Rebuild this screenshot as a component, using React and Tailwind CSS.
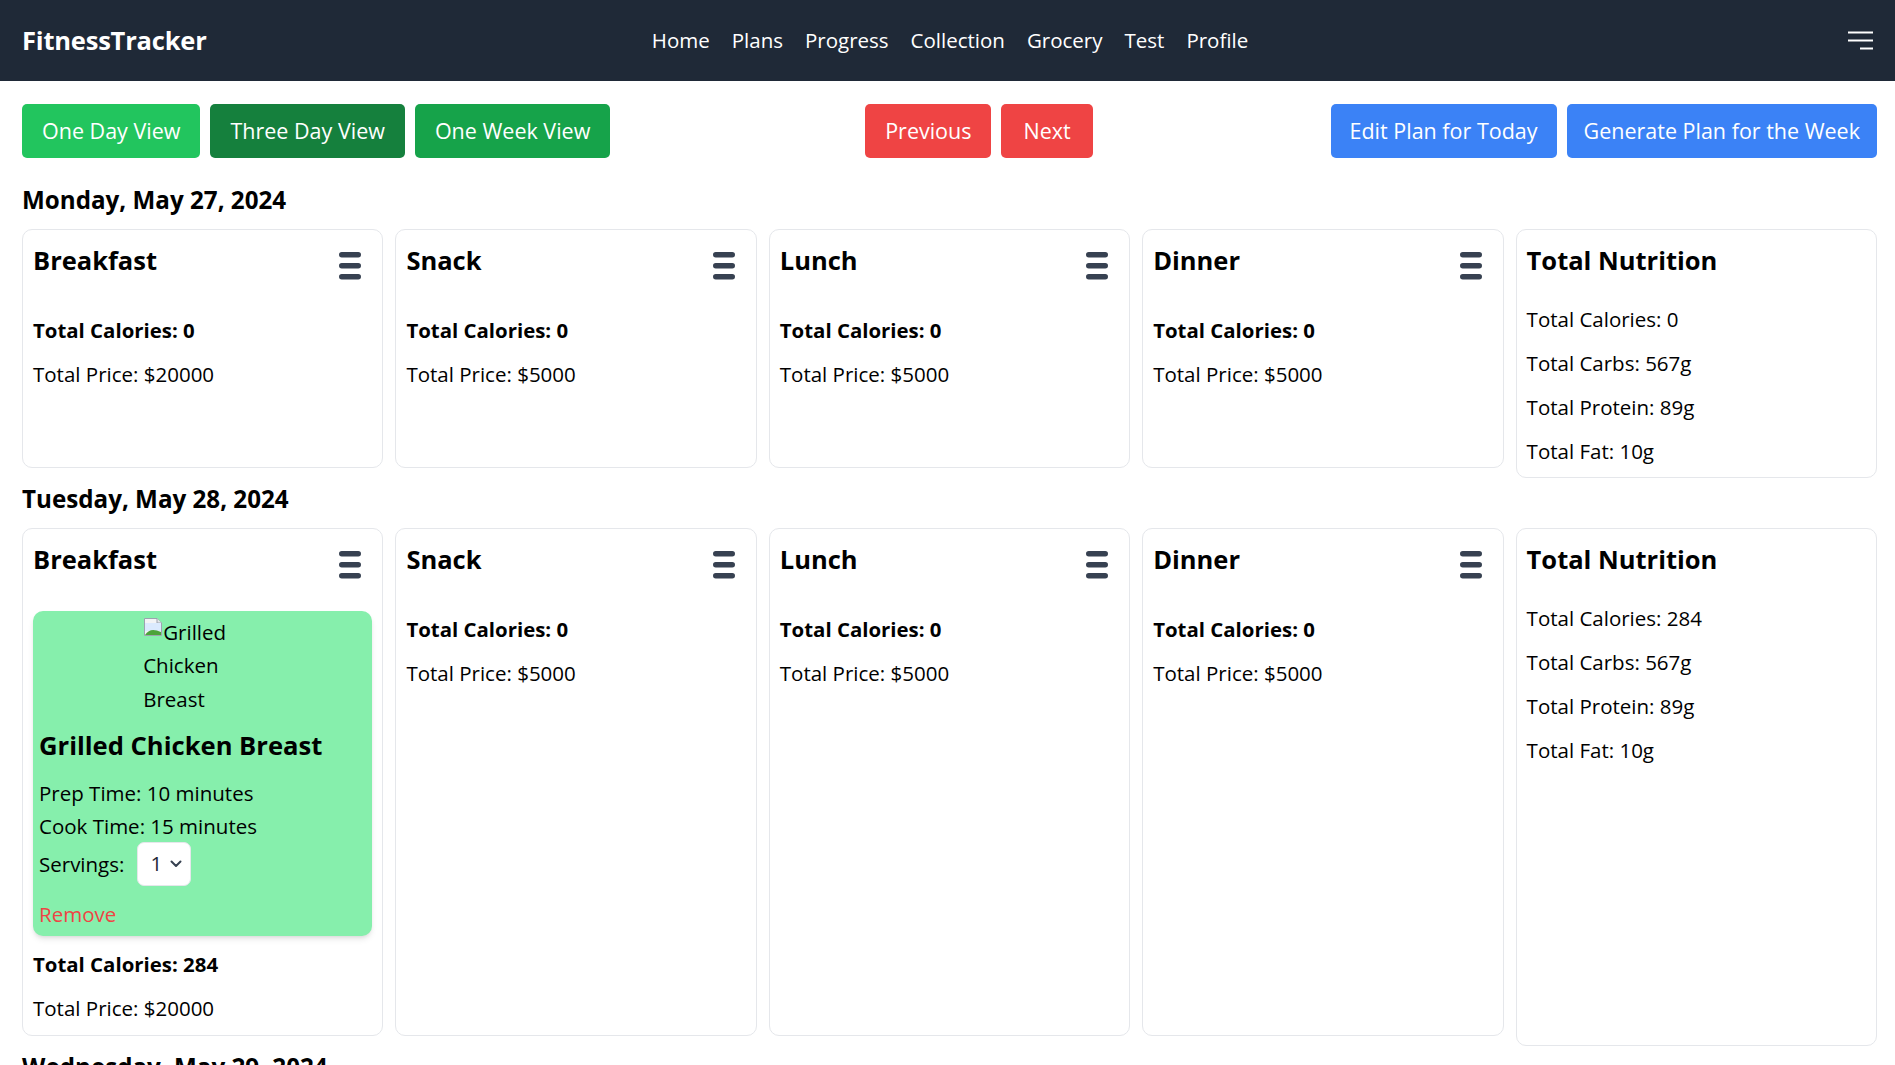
import React from "react";

const NavBurger = () => (
  <svg width="25" height="20" viewBox="0 0 25 20" fill="none">
    <line x1="0" y1="1.5" x2="25" y2="1.5" stroke="white" strokeWidth="2" />
    <line x1="0" y1="9.5" x2="25" y2="9.5" stroke="white" strokeWidth="2" />
    <line x1="12" y1="17.5" x2="25" y2="17.5" stroke="white" strokeWidth="2" />
  </svg>
);

const CardBurger = () => (
  <svg width="22" height="28" viewBox="0 0 22 28">
    <rect x="0" y="0" width="22" height="5.5" rx="2.75" fill="#374151" />
    <rect x="0" y="11" width="22" height="5.5" rx="2.75" fill="#374151" />
    <rect x="0" y="22" width="22" height="5.5" rx="2.75" fill="#374151" />
  </svg>
);

const BrokenImage = () => (
  <svg width="20" height="20" viewBox="0 0 20 20" className="inline-block align-top mt-[1px]">
    <path d="M1.5 1.5 H14 L18.5 6 V18.5 H1.5 Z" fill="#f3f4f6" stroke="#9ca3af" strokeWidth="1" />
    <path d="M14 1.5 V6 H18.5" fill="#e5e7eb" stroke="#9ca3af" strokeWidth="1" />
    <rect x="2" y="6" width="16" height="8" fill="#dbeafe" />
    <path d="M2 18 C6 12 11 12 18 15 V18 Z" fill="#4ca33a" />
  </svg>
);

const Chevron = () => (
  <svg width="12" height="8" viewBox="0 0 12 8" fill="none">
    <path d="M1.5 1.5 L6 6 L10.5 1.5" stroke="#374151" strokeWidth="2" strokeLinecap="round" strokeLinejoin="round" />
  </svg>
);

const days = [
  {
    label: "Monday, May 27, 2024",
    meals: [
      { name: "Breakfast", cal: 0, price: 20000, items: [] },
      { name: "Snack", cal: 0, price: 5000, items: [] },
      { name: "Lunch", cal: 0, price: 5000, items: [] },
      { name: "Dinner", cal: 0, price: 5000, items: [] },
    ],
    totals: { cal: 0, carbs: 567, protein: 89, fat: 10 },
  },
  {
    label: "Tuesday, May 28, 2024",
    meals: [
      {
        name: "Breakfast",
        cal: 284,
        price: 20000,
        items: [{ title: "Grilled Chicken Breast", prep: 10, cook: 15, servings: 1 }],
      },
      { name: "Snack", cal: 0, price: 5000, items: [] },
      { name: "Lunch", cal: 0, price: 5000, items: [] },
      { name: "Dinner", cal: 0, price: 5000, items: [] },
    ],
    totals: { cal: 284, carbs: 567, protein: 89, fat: 10 },
  },
  {
    label: "Wednesday, May 29, 2024",
    meals: [
      { name: "Breakfast", cal: 0, price: 20000, items: [] },
      { name: "Snack", cal: 0, price: 5000, items: [] },
      { name: "Lunch", cal: 0, price: 5000, items: [] },
      { name: "Dinner", cal: 0, price: 5000, items: [] },
    ],
    totals: { cal: 0, carbs: 567, protein: 89, fat: 10 },
  },
];

function MealItem({ item }) {
  return (
    <div className="bg-[#86efac] rounded-[10px] shadow-md pt-[5px] pb-[7px] pl-[6px] pr-[5px]">
      <div className="w-[120px] h-[113px] mx-auto text-[20.5px] leading-[33.5px]">
        <BrokenImage />
        {item.title}
      </div>
      <h3 className="text-[25.6px] font-bold leading-[34px]">{item.title}</h3>
      <p className="mt-[15px] leading-[30px] text-[20.5px]">Prep Time: {item.prep} minutes</p>
      <p className="mt-[3px] leading-[30px] text-[20.5px]">Cook Time: {item.cook} minutes</p>
      <div className="mt-[1px] flex items-center">
        <span className="text-[20.5px] leading-[30px] mr-[13px]">Servings:</span>
        <div className="w-[54px] h-[44px] bg-white border border-[#e5e7eb] rounded-[7px] flex items-center pl-[12px] pr-[8px] justify-between">
          <span className="text-[20.5px] text-[#1f2937]">{item.servings}</span>
          <Chevron />
        </div>
      </div>
      <p className="mt-[13px] text-[20.5px] leading-[30px] text-[#ef4444]">Remove</p>
    </div>
  );
}

function MealCard({ meal }) {
  const hasItems = meal.items.length > 0;
  return (
    <div className="mb-[10px] border border-[#e5e7eb] rounded-[10px] p-[10px] pb-[12px]">
      <div className="flex justify-between items-start h-[40px]">
        <h2 className="text-[25.5px] font-bold leading-[40px]">{meal.name}</h2>
        <div className="mt-[12px] mr-[11px]">
          <CardBurger />
        </div>
      </div>
      {hasItems && (
        <div className="mt-[32px] flex flex-col gap-3">
          {meal.items.map((it, i) => (
            <MealItem key={i} item={it} />
          ))}
        </div>
      )}
      <p className={(hasItems ? "mt-[13px]" : "mt-[35px]") + " text-[20.4px] font-bold leading-[30px]"}>
        Total Calories: {meal.cal}
      </p>
      <p className="mt-[14px] text-[20.5px] leading-[30px]">Total Price: ${meal.price}</p>
    </div>
  );
}

function TotalCard({ totals }) {
  return (
    <div className="border border-[#e5e7eb] rounded-[10px] p-[10px] pb-[10.5px]">
      <h2 className="text-[25.5px] font-bold leading-[40px]">Total Nutrition</h2>
      <div className="mt-[24px] flex flex-col gap-[14px] text-[20.5px] leading-[30px]">
        <p>Total Calories: {totals.cal}</p>
        <p>Total Carbs: {totals.carbs}g</p>
        <p>Total Protein: {totals.protein}g</p>
        <p>Total Fat: {totals.fat}g</p>
      </div>
    </div>
  );
}

export default function App() {
  const btn = "h-[54px] rounded-[5px] text-white text-[21.5px] flex items-center";
  return (
    <div className="min-h-screen bg-white text-black font-['Open_Sans',sans-serif]">
      <nav className="h-[81px] bg-[#1f2937] grid grid-cols-[1fr_auto_1fr] items-center px-[22px]">
        <div className="text-white font-bold text-[25.5px] tracking-[-0.2px]">FitnessTracker</div>
        <div className="flex items-center gap-[22px] text-white text-[20.5px] ml-[5px]">
          <span>Home</span>
          <span>Plans</span>
          <span>Progress</span>
          <span>Collection</span>
          <span>Grocery</span>
          <span>Test</span>
          <span>Profile</span>
        </div>
        <div className="flex justify-end">
          <NavBurger />
        </div>
      </nav>

      <main className="pl-[22px] pr-[18px]">
        <div className="mt-[23px] flex items-center justify-between">
          <div className="flex gap-[10px]">
            <button className={btn + " px-[20px] bg-[#22c55e]"}>One Day View</button>
            <button className={btn + " px-[20px] bg-[#15803d]"}>Three Day View</button>
            <button className={btn + " px-[20px] bg-[#16a34a]"}>One Week View</button>
          </div>
          <div className="flex gap-[10px] ml-[17px]">
            <button className={btn + " px-[20px] bg-[#ef4444]"}>Previous</button>
            <button className={btn + " px-[22px] bg-[#ef4444]"}>Next</button>
          </div>
          <div className="flex gap-[10px]">
            <button className={btn + " px-[19px] bg-[#3b82f6]"}>Edit Plan for Today</button>
            <button className={btn + " px-[17px] bg-[#3b82f6]"}>Generate Plan for the Week</button>
          </div>
        </div>

        <div className="mt-[25px]">
          {days.map((d, i) => (
            <section key={i} className={i === 0 ? "" : "mt-[4px]"}>
              <h1 className="text-[24.2px] font-bold leading-[34px] mb-[12px]">{d.label}</h1>
              <div className="grid grid-cols-5 gap-x-[12px]">
                {d.meals.map((m, j) => (
                  <MealCard key={j} meal={m} />
                ))}
                <TotalCard totals={d.totals} />
              </div>
            </section>
          ))}
        </div>
      </main>
    </div>
  );
}
